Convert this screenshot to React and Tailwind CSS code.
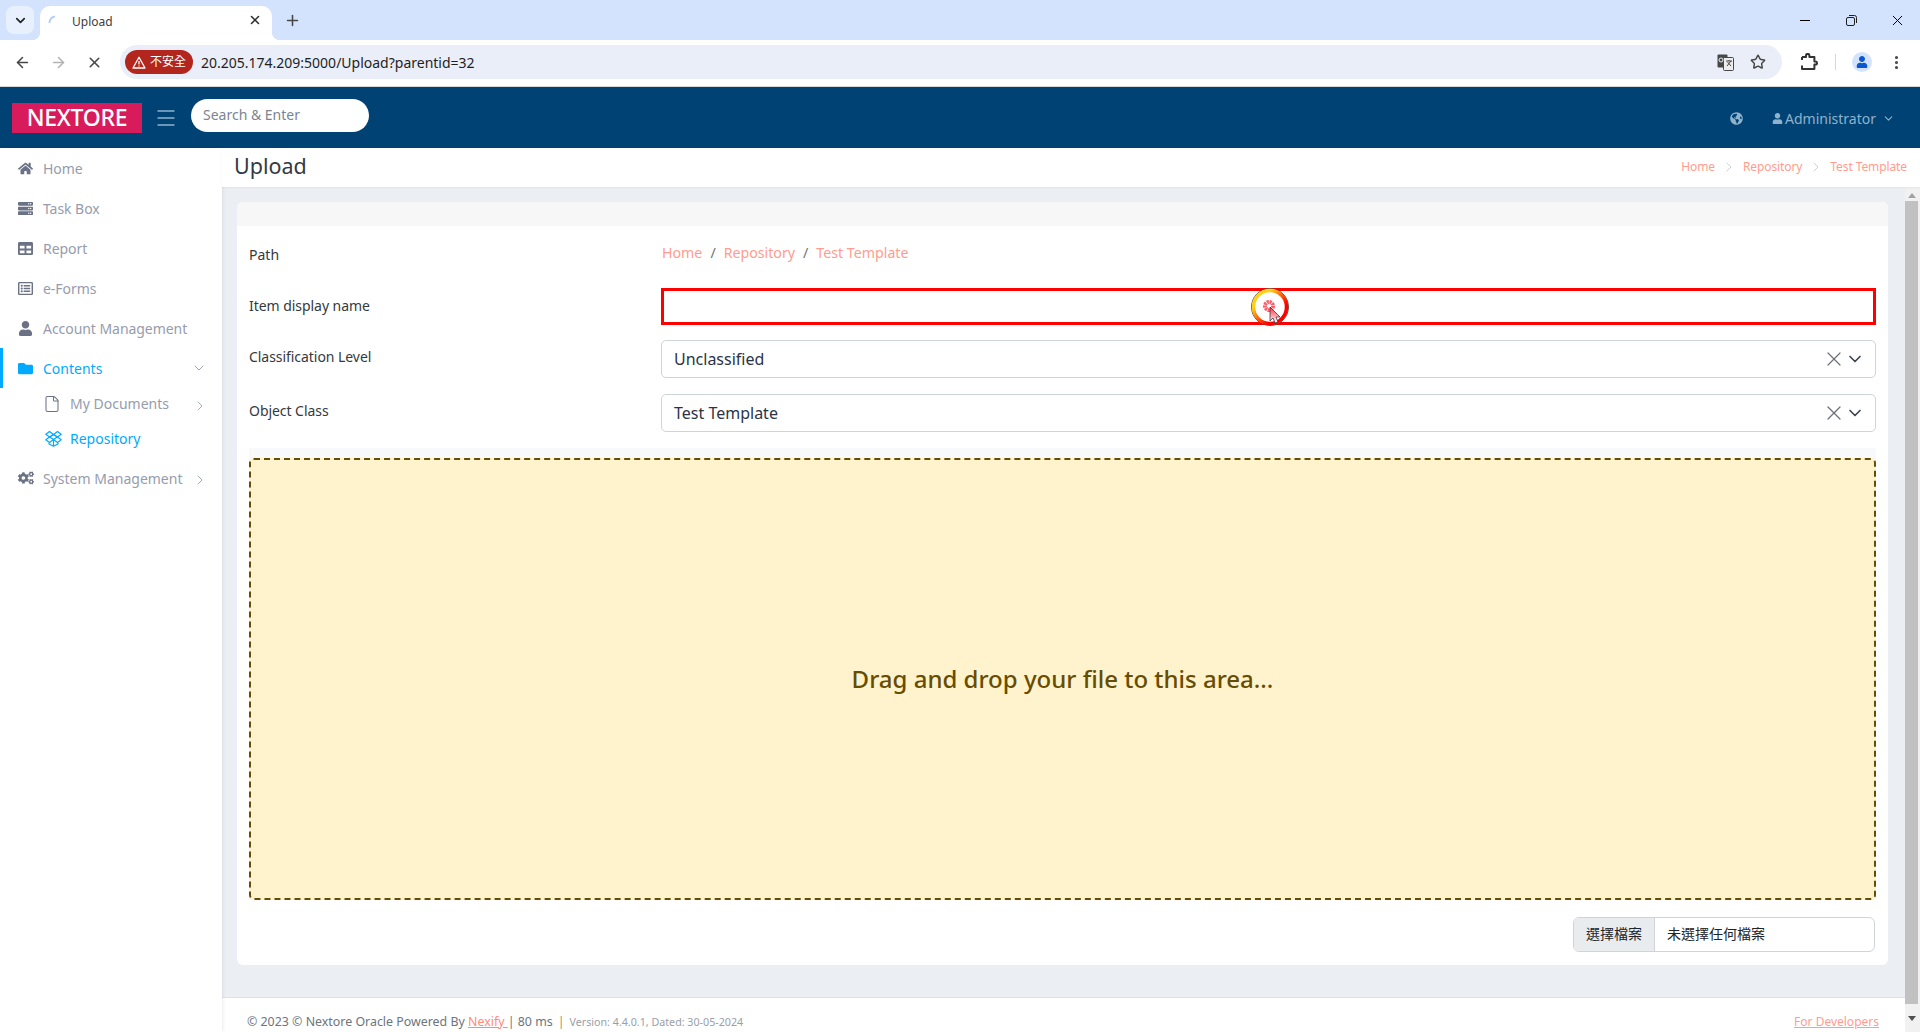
import React from 'react';
import { ArrowLeft, ArrowRight, ChevronDown, ChevronRight, EllipsisVertical, File, Menu, Plus, Star, X } from 'lucide-react';
import { FaCogs, FaFolder, FaGlobeAmericas, FaHome, FaRegListAlt, FaServer, FaTable, FaUser } from 'react-icons/fa';

const FONT = { fontFamily: '"Noto Sans", "Noto Sans CJK TC", sans-serif' };

const NAV_ITEMS = [
  { label: 'Home', icon: FaHome },
  { label: 'Task Box', icon: FaServer },
  { label: 'Report', icon: FaTable },
  { label: 'e-Forms', icon: FaRegListAlt },
  { label: 'Account Management', icon: FaUser },
];

const BrowserChrome = () => (
  <div className="shrink-0">
    {/* tab strip */}
    <div className="h-[40px] bg-[#d3e3fd] flex items-end relative">
      <div className="absolute left-[6px] top-[6px] w-[28px] h-[28px] rounded-lg bg-[#e8f0fe] flex items-center justify-center">
        <ChevronDown size={15} strokeWidth={2.6} className="text-[#1f1f1f]" />
      </div>
      <div className="ml-[40px] w-[232px] h-[34px] bg-white rounded-t-[10px] flex items-center relative pb-[3px]">
        <div className="absolute -left-[8px] bottom-0 w-[8px] h-[8px] bg-[radial-gradient(circle_at_0_0,#d3e3fd_8px,white_8px)]" />
        <div className="absolute -right-[8px] bottom-0 w-[8px] h-[8px] bg-[radial-gradient(circle_at_100%_0,#d3e3fd_8px,white_8px)]" />
        <svg width="14" height="14" viewBox="0 0 14 14" className="ml-[8px]">
          <path d="M1.5 8 A6 6 0 0 1 7 1.5" fill="none" stroke="#b6cdf3" strokeWidth="2" />
        </svg>
        <span className="ml-[10px] text-[12px] text-[#3c4043]">Upload</span>
        <X size={14} strokeWidth={2.6} className="absolute right-[10px] top-[7px] text-[#2b2b2b]" />
      </div>
      <Plus size={17} strokeWidth={2.2} className="ml-[12px] mb-[11px] text-[#474747]" />
      <div className="ml-auto flex items-center h-[40px] text-[#1f1f1f]">
        <div className="w-[46px] flex justify-center"><div className="w-[10px] h-[1px] bg-black" /></div>
        <div className="w-[46px] flex justify-center">
          <svg width="11" height="11" viewBox="0 0 11 11" fill="none" stroke="#1f1f1f">
            <rect x="0.5" y="2.5" width="8" height="8" rx="1.5" />
            <path d="M3 0.5h5.5a2 2 0 0 1 2 2V8" />
          </svg>
        </div>
        <div className="w-[46px] flex justify-center"><X size={17} strokeWidth={1.4} className="text-black" /></div>
      </div>
    </div>
    {/* toolbar */}
    <div className="h-[47px] bg-white rounded-t-lg flex items-center border-b border-[#d5d5d5] pb-[2px] relative">
      <ArrowLeft size={17} strokeWidth={2.2} className="ml-[14px] text-[#474747]" />
      <ArrowRight size={17} strokeWidth={2.2} className="ml-[19px] text-[#b3b3b3]" />
      <X size={17} strokeWidth={2.2} className="ml-[19px] text-[#474747]" />
      <div className="ml-[17px] w-[1662px] h-[34px] rounded-full bg-[#e9eef8] flex items-center">
        <div className="ml-[5px] w-[68px] h-[24px] rounded-full bg-[#b3261e] text-white flex items-center justify-center gap-[4px] text-[12px]">
          <svg width="14" height="13" viewBox="0 0 14 13" fill="none" stroke="white" strokeWidth="1.3">
            <path d="M7 1.2 L13 12 H1 Z" strokeLinejoin="round" />
            <path d="M7 5v3.5M7 9.5v1" />
          </svg>
          不安全
        </div>
        <span className="ml-[8px] text-[14px] text-[#1f1f1f]">20.205.174.209:5000/Upload?parentid=32</span>
        <div className="ml-auto flex items-center mr-[16px] gap-[16px]">
          <svg width="17" height="17" viewBox="0 0 17 17">
            <rect x="0.5" y="0.5" width="10" height="13" rx="1" fill="#474747" />
            <rect x="6.5" y="3.5" width="10" height="13" rx="1" fill="#ececec" stroke="#474747" />
            <path d="M9 7h6M12 6v1M10 12l4-5M10.5 8l3.5 4" stroke="#474747" fill="none" />
            <circle cx="4" cy="6" r="2" fill="none" stroke="#e9eef8" />
          </svg>
          <Star size={16} strokeWidth={2.2} className="text-[#474747]" />
        </div>
      </div>
      <svg width="18" height="18" viewBox="0 0 18 18" fill="none" stroke="#333" strokeWidth="2" className="ml-[18px]">
        <path d="M2 4h4V2.6a1.7 1.7 0 0 1 3.4 0V4h5v4.4h1a1.6 1.6 0 0 1 0 3.2h-1V16H2v-3.5" strokeLinejoin="round" />
        <path d="M2 4v3" />
      </svg>
      <div className="ml-[17px] w-px h-[16px] bg-[#c6dafc]" />
      <div className="ml-[16px] w-[20px] h-[20px] rounded-full bg-[#d3e3fd] flex items-center justify-center overflow-hidden">
        <FaUser size={12} className="text-[#0b57d0]" />
      </div>
      <EllipsisVertical size={17} strokeWidth={2.4} className="ml-[16px] text-[#474747]" />
    </div>
  </div>
);

const AppHeader = () => (
  <div className="h-[61px] shrink-0 bg-[#004274] flex items-center relative">
    <div className="ml-[12px] w-[130px] h-[30px] bg-[#d81b5a] text-white text-[23px] font-medium flex items-center justify-center tracking-[-0.3px]">NEXTORE</div>
    <Menu size={24} strokeWidth={1.4} className="ml-[12px] text-[#8fb2cd]" />
    <div className="ml-[13px] -mt-[5px] w-[178px] h-[33px] rounded-full bg-white pl-[12px] pb-[1px] flex items-center text-[14px] text-[#7c8590]">Search &amp; Enter</div>
    <div className="ml-auto flex items-center text-[#8fb2cd] text-[14px] mr-[25px] mt-[2px]">
      <FaGlobeAmericas size={13} />
      <FaUser size={11} className="ml-[29px] mr-[2px]" />
      <span>Administrator</span>
      <ChevronDown size={13} strokeWidth={2} className="ml-[6px]" />
    </div>
  </div>
);

const RepositoryIcon = () => (
  <svg width="17" height="17" viewBox="0 0 17 17" fill="none" stroke="currentColor" strokeWidth="1.2" strokeLinejoin="round">
    <path d="M8.5 4.5 L4.5 1.5 L0.8 4.2 L4.6 7 Z" />
    <path d="M8.5 4.5 L12.5 1.5 L16.2 4.2 L12.4 7 Z" />
    <path d="M4.6 7 L8.5 9.6 L12.4 7 L8.5 4.5 Z" />
    <path d="M4.6 7 L0.8 9.8 L4.5 12.4 L8.5 9.6 L12.5 12.4 L16.2 9.8 L12.4 7" />
    <path d="M4 13 V14 L8.5 16.2 L13 14 V13 M8.5 10 V16" />
  </svg>
);

const Sidebar = () => (
  <div className="w-[222px] shrink-0 bg-white shadow-[1px_0_3px_rgba(0,0,0,0.08)] z-10">
    {NAV_ITEMS.map(({ label, icon: Icon }) => (
      <div key={label} className="h-[40px] flex items-center text-[14px] tracking-[-0.05px] text-[#969cad]">
        <div className="w-[43px] pl-[18px]"><Icon size={15} className="text-[#6b7285]" /></div>
        {label}
      </div>
    ))}
    <div className="h-[40px] flex items-center text-[14px] text-[#00aaff] border-l-[3px] border-[#00aaff]">
      <div className="w-[40px] pl-[15px]"><FaFolder size={15} /></div>
      Contents
      <ChevronDown size={16} strokeWidth={1.3} className="ml-auto mr-[15px] text-[#8c93a5]" />
    </div>
    <div className="h-[35px] flex items-center text-[14px] text-[#969cad] -mt-[2px]">
      <div className="w-[70px] pl-[43px]"><File size={18} strokeWidth={1.4} className="text-[#6b7285]" /></div>
      My Documents
      <ChevronRight size={16} strokeWidth={1.3} className="ml-auto mr-[14px] mt-[4px]" />
    </div>
    <div className="h-[35px] flex items-center text-[14px] text-[#00aaff]">
      <div className="w-[70px] pl-[45px]"><RepositoryIcon /></div>
      Repository
    </div>
    <div className="h-[40px] flex items-center text-[14px] text-[#969cad] mt-[2px]">
      <div className="w-[43px] pl-[18px]"><FaCogs size={16} className="text-[#6b7285]" /></div>
      System Management
      <ChevronRight size={16} strokeWidth={1.3} className="ml-auto mr-[14px] mt-[4px]" />
    </div>
  </div>
);

const SelectBox = ({ value }) => (
  <div className="h-[38px] flex-1 border border-[#ced4da] rounded-[5px] flex items-center pl-[12px] text-[16px] text-[#2b3445]">
    {value}
    <X size={24} strokeWidth={1.2} className="ml-auto text-[#6b6f76]" />
    <ChevronDown size={20} strokeWidth={2} className="-ml-px mr-[10px] text-[#3d4450]" />
  </div>
);

const FormRow = ({ label, className, labelClass, children }) => (
  <div className={`flex items-center ${className}`}>
    <div className={`w-[412px] text-[14px] tracking-[-0.05px] text-[#343a40] ${labelClass}`}>{label}</div>
    {children}
  </div>
);

const UploadCard = () => (
  <div className="ml-[15px] mr-[17px] mt-[15px] bg-white rounded-[6px] overflow-hidden">
    <div className="h-[24px] bg-[#f7f7f7]" />
    <div className="px-[12px] pt-[12px] pb-[13px]">
      <div className="flex items-center h-[30px]">
        <div className="w-[412px] text-[14px] text-[#343a40] pt-[2px]">Path</div>
        <div className="text-[14.2px] text-[#ff9c8f] flex gap-[8px] pl-px">
          <span>Home</span><span className="text-[#6c757d]">/</span>
          <span>Repository</span><span className="text-[#6c757d]">/</span>
          <span>Test Template</span>
        </div>
      </div>
      <FormRow label="Item display name" className="mt-[20px]" labelClass="pb-[3px]">
        <div className="relative flex-1 h-[37px] border-[3px] border-[#ff0000] bg-white">
          {/* click highlight from the screen recorder */}
          <svg width="40" height="40" viewBox="0 0 40 40" className="absolute left-[586px] -top-[4px]">
            <defs>
              <linearGradient id="ring" x1="0" y1="0" x2="1" y2="1">
                <stop offset="0.25" stopColor="#ffd21a" />
                <stop offset="0.7" stopColor="#ff0000" />
              </linearGradient>
              <linearGradient id="arrow" x1="0" y1="0" x2="0" y2="1">
                <stop offset="0" stopColor="#ff3040" />
                <stop offset="1" stopColor="#ffffff" />
              </linearGradient>
            </defs>
            <circle cx="20" cy="20" r="18.5" fill="#ffffff" stroke="#4a2a10" strokeWidth="0.8" />
            <circle cx="20" cy="20" r="16.5" fill="none" stroke="url(#ring)" strokeWidth="3.5" />
            <circle cx="19" cy="19" r="4" fill="none" stroke="#ff5a66" strokeWidth="4" strokeDasharray="2 0.7" />
            <path d="M20 20 V34 L23 31 L25 36 L28 35 L26 30 L30 30 Z" fill="url(#arrow)" stroke="#1f2937" strokeWidth="0.7" />
          </svg>
        </div>
      </FormRow>
      <FormRow label="Classification Level" className="mt-[15px]" labelClass="pb-[5px]"><SelectBox value="Unclassified" /></FormRow>
      <FormRow label="Object Class" className="mt-[16px]" labelClass="pb-[5px]"><SelectBox value="Test Template" /></FormRow>
      <div className="mt-[16px] pt-[10px] bg-[#f8f9fa]">
        <div className="h-[442px] border-2 border-dashed border-[#664d03] rounded-[5px] bg-[#fff3cd] flex items-center justify-center text-[24px] font-medium text-[#664d03]">
          Drag and drop your file to this area...
        </div>
      </div>
      <div className="mt-[17px] flex justify-end pr-px">
        <div className="w-[302px] h-[35px] border border-[#ced4da] rounded-[6px] overflow-hidden flex items-center text-[14px] text-[#212529]">
          <div className="w-[81px] h-full bg-[#e9ecef] border-r border-[#ced4da] flex items-center justify-center pb-[2px]">選擇檔案</div>
          <div className="pl-[12px] pb-[2px]">未選擇任何檔案</div>
        </div>
      </div>
    </div>
  </div>
);

const Footer = () => (
  <div className="h-[35px] shrink-0 bg-white border-t border-[#dee2e6] flex items-center pl-[25px] pr-[26px] pt-[14px] text-[12.4px] text-[#6c757d]">
    <span>© 2023 © Nextore Oracle Powered By <span className="text-[#ff8a7a] underline">Nexify </span> | 80 ms</span>
    <span className="mx-[5px] text-[#a08c70]">|</span>
    <span className="text-[10.7px] text-[#98a0a8]">Version: 4.4.0.1, Dated: 30-05-2024</span>
    <span className="ml-auto text-[12px] text-[#ff9c8f] underline">For Developers</span>
  </div>
);

const Scrollbar = () => (
  <div className="w-[15px] shrink-0 bg-[#f1f1f1] flex flex-col items-start">
    <div className="w-[13px] h-[14px] flex items-center justify-center pt-[2px]">
      <div className="w-0 h-0 border-x-[4px] border-x-transparent border-b-[5px] border-b-[#a3a3a3]" />
    </div>
    <div className="w-[13px] flex-1 bg-[#c1c1c1]" />
    <div className="w-[13px] h-[28px] flex items-center justify-center">
      <div className="w-0 h-0 border-x-[4px] border-x-transparent border-t-[5px] border-t-[#505050]" />
    </div>
  </div>
);

export default function App() {
  return (
    <div style={FONT} className="w-[1920px] h-[1032px] overflow-hidden flex flex-col bg-white">
      <BrowserChrome />
      <AppHeader />
      <div className="flex-1 flex min-h-0">
        <Sidebar />
        <div className="flex-1 flex flex-col min-w-0">
          <div className="h-[39px] shrink-0 bg-white flex items-center pl-[12px] pr-[13px] shadow-[0_1px_2px_rgba(0,0,0,0.05)] z-10">
            <span className="text-[21.5px] text-[#343a40] pb-[2px]">Upload</span>
            <div className="ml-auto flex items-center text-[12px] tracking-[-0.1px] text-[#ff9c8f] pb-[1px]">
              <span>Home</span>
              <ChevronRight size={16} strokeWidth={1.2} className="mx-[6px] text-[#b9c6d6]" />
              <span>Repository</span>
              <ChevronRight size={16} strokeWidth={1.2} className="mx-[6px] text-[#b9c6d6]" />
              <span>Test Template</span>
            </div>
          </div>
          <div className="flex-1 flex min-h-0">
            <div className="flex-1 flex flex-col min-w-0 bg-[#ebeef3]">
              <div className="flex-1 min-h-0"><UploadCard /></div>
              <Footer />
            </div>
            <Scrollbar />
          </div>
        </div>
      </div>
    </div>
  );
}
